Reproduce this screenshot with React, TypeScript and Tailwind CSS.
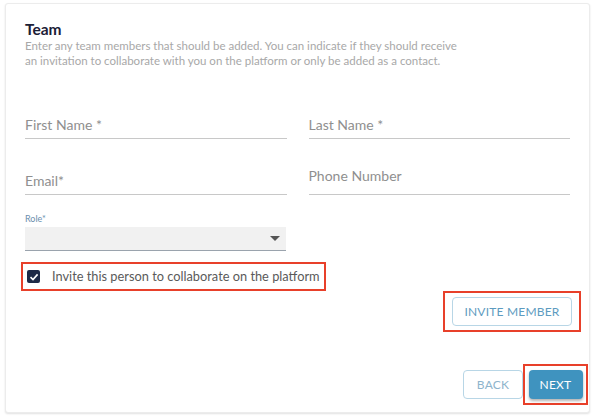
import React from 'react';

const font = { fontFamily: 'Lato, "Liberation Sans", sans-serif' };

function LineField({ label, raised }: { label: string; raised?: boolean }) {
  return (
    <div className="flex-1 h-[38px] flex flex-col justify-end border-b border-[#c8c8c8]">
      <span className={`text-[14px] text-[#8f8f8f] leading-none whitespace-nowrap ${raised ? 'mb-[11px]' : 'mb-[6px]'}`}>{label}</span>
    </div>
  );
}

export default function App() {
  return (
    <div className="w-[600px] h-[420px] bg-white pt-[3px] pl-[5px]" style={font}>
      <div className="w-[585px] h-[410px] bg-white border border-[#ececec] rounded-[3px] shadow-[0_1px_2px_rgba(0,0,0,0.12)] px-[19px] pt-[16px] flex flex-col">
        <h2 className="text-[15.5px] font-bold text-[#1b2036] leading-[18px]">Team</h2>
        <p className="text-[11.5px] text-[#a8a8a8] leading-[15px] whitespace-nowrap">
          Enter any team members that should be added. You can indicate if they should receive
          <br />
          an invitation to collaborate with you on the platform or only be added as a contact.
        </p>

        <div className="flex gap-[22px] mt-[33px] w-[545px]">
          <LineField label="First Name *" />
          <LineField label="Last Name *" />
        </div>

        <div className="flex gap-[22px] mt-[18px] w-[545px]">
          <LineField label="Email*" />
          <LineField label="Phone Number" raised />
        </div>

        <div className="mt-[19px] w-[261px]">
          <div className="text-[9px] text-[#6b8fae] leading-none mb-[4px]">Role*</div>
          <div className="h-[24px] bg-[#f1f1f1] border-b border-[#9aa3ad] flex items-center justify-end pr-[6px]">
            <svg width="10" height="5" viewBox="0 0 10 5">
              <path d="M0 0 L10 0 L5 5 Z" fill="#555" />
            </svg>
          </div>
        </div>

        <div className="mt-[11px] -ml-[4px] w-[305px] h-[29px] border-2 border-[#e8402a] flex items-center pl-[4px]">
          <span className="w-[13px] h-[13px] rounded-[2px] bg-[#1e2a47] flex items-center justify-center">
            <svg width="10" height="10" viewBox="0 0 10 10">
              <path d="M1.5 5.2 L4 7.6 L8.6 2.4" stroke="#fff" strokeWidth="1.6" fill="none" />
            </svg>
          </span>
          <span className="ml-[12px] text-[12.8px] text-[#5a5a5a] whitespace-nowrap">Invite this person to collaborate on the platform</span>
        </div>

        <div className="flex justify-end w-[556px]">
          <div className="border-2 border-[#e8402a] w-[138px] h-[41px] flex items-center justify-center">
            <button className="w-[120px] h-[29px] border border-[#b8d6e6] rounded-[4px] text-[12px] tracking-[0.2px] text-[#5d9bc0]">
              INVITE MEMBER
            </button>
          </div>
        </div>

        <div className="flex justify-end items-center mt-[32px] w-[563px]">
          <button className="w-[60px] h-[29px] border border-[#b8d6e6] rounded-[4px] text-[12px] tracking-[0.2px] text-[#8eb4cc]">
            BACK
          </button>
          <div className="border-2 border-[#e8402a] w-[65px] h-[41px] flex items-center justify-center">
            <button className="w-[54px] h-[29px] bg-[#3f93bf] rounded-[4px] text-[12px] tracking-[0.2px] text-white shadow-[0_2px_3px_rgba(0,0,0,0.3)]">
              NEXT
            </button>
          </div>
        </div>
      </div>
    </div>
  );
}
